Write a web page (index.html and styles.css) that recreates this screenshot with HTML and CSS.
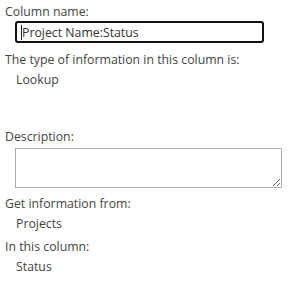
FILE: index.html
```html
<!DOCTYPE html>
<html>
<head>
    <title>Column settings</title>
    <link rel="stylesheet" href="styles.css">
</head>
<body>
    <div class="form">
        <div class="label">Column name:</div>
        <div class="name-wrap">
            <input class="name-input" type="text" value="Project Name:Status">
            <span class="caret"></span>
        </div>
        <div class="label type-label">The type of information in this column is:</div>
        <div class="value">Lookup</div>

        <div class="label desc-label">Description:</div>
        <textarea class="desc"></textarea>

        <div class="label from-label">Get information from:</div>
        <div class="value">Projects</div>
        <div class="label col-label">In this column:</div>
        <div class="value col-value">Status</div>
    </div>
</body>
</html>
```

FILE: styles.css
```css
body {
    margin: 0;
    background: #fff;
    font-family: "Open Sans", "Noto Sans", sans-serif;
    font-size: 12.3px;
    color: #444;
}
.form {
    padding: 3px 0 0 5px;
}
.label {
    line-height: 18px;
}
.value {
    line-height: 18px;
    padding-left: 11px;
    margin-top: 2px;
}
.name-wrap {
    position: relative;
    margin-left: 10px;
    width: 249px;
}
.name-input {
    display: block;
    box-sizing: border-box;
    width: 249px;
    height: 22px;
    margin: 0;
    padding: 0 5px;
    border: 2px solid #111;
    border-radius: 3px;
    font-family: inherit;
    font-size: 12.3px;
    color: #333;
    outline: none;
}
.caret {
    position: absolute;
    left: 6px;
    top: 4px;
    width: 1px;
    height: 15px;
    background: #222;
}
.type-label {
    margin-top: 8px;
}
.desc-label {
    margin-top: 39px;
}
.desc {
    display: block;
    box-sizing: border-box;
    width: 267px;
    height: 40px;
    margin: 2px 0 0 10px;
    border: 1px solid #ababab;
    resize: both;
    font-family: inherit;
}
.from-label {
    margin-top: 7px;
}
.col-label {
    margin-top: 5px;
}
```
